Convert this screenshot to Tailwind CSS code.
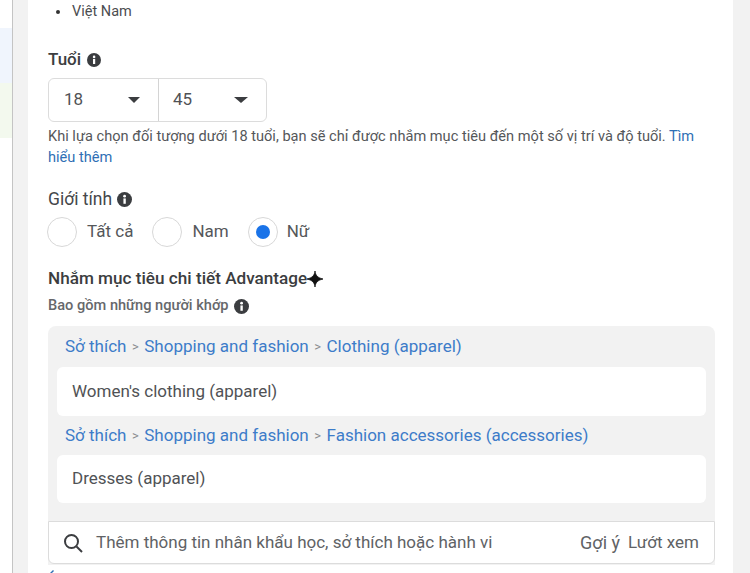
<!DOCTYPE html>
<html lang="vi">
<head>
<meta charset="UTF-8">
<title>Nhắm mục tiêu</title>
<script src="https://cdn.jsdelivr.net/npm/@tailwindcss/browser@4"></script>
</head>
<body class="bg-white overflow-hidden font-['Roboto',sans-serif]">
<div class="flex w-[750px] h-[573px] overflow-hidden">
  <!-- left edge of the page behind the panel -->
  <div class="w-[12px] flex flex-col shrink-0">
    <div class="h-[28px] bg-white"></div>
    <div class="h-[55px] bg-[#f0f5fd]"></div>
    <div class="h-[55px] bg-[#f3f9ee]"></div>
  </div>
  <div class="w-[16px] shrink-0 bg-[#f2f2f2] border-l border-[#c4c4c4]"></div>

  <div class="w-[705px] shrink-0 pl-[20px] pr-[18px] text-[#3b3d40]">
    <!-- location -->
    <div class="h-[24px] flex items-center pl-[8px] text-[14.5px] text-[#4b4d50]">
      <span class="w-[4px] h-[4px] rounded-full bg-[#333] mr-[12px]"></span>Việt Nam
    </div>

    <!-- age -->
    <div class="mt-[25px] h-[22px] flex items-center gap-[6px] text-[17px] font-medium">
      Tuổi
      <svg class="w-[14px] h-[14px]" viewBox="0 0 14 14"><circle cx="7" cy="7" r="7" fill="#3b3d40"/><rect x="6" y="6" width="2.2" height="5" fill="#fff"/><circle cx="7.1" cy="3.9" r="1.3" fill="#fff"/></svg>
    </div>
    <div class="mt-[7px] w-[219px] h-[44px] flex border border-[#dcdcdc] rounded-[6px] text-[17px] text-[#505255]">
      <div class="w-[110px] flex items-center justify-between pl-[15px] pr-[18px] border-r border-[#d4d4d4]">
        18
        <span class="w-0 h-0 border-x-[6px] border-x-transparent border-t-[6px] border-t-[#3b3d40]"></span>
      </div>
      <div class="flex-1 flex items-center justify-between pl-[14px] pr-[18px]">
        45
        <span class="w-0 h-0 border-x-[7px] border-x-transparent border-t-[6px] border-t-[#3b3d40]"></span>
      </div>
    </div>
    <div class="mt-[4px] text-[14.6px] leading-[21px] text-[#55575a]">
      <div>Khi lựa chọn đối tượng dưới 18 tuổi, bạn sẽ chỉ được nhắm mục tiêu đến một số vị trí và độ tuổi. <span class="text-[#2f6fb5]">Tìm</span></div>
      <div class="text-[#2f6fb5]">hiểu thêm</div>
    </div>

    <!-- gender -->
    <div class="mt-[20px] h-[22px] flex items-center gap-[5px] text-[17.5px] text-[#45474a]">
      Giới tính
      <svg class="w-[15px] h-[15px]" viewBox="0 0 14 14"><circle cx="7" cy="7" r="7" fill="#3b3d40"/><rect x="6" y="6" width="2.2" height="5" fill="#fff"/><circle cx="7.1" cy="3.9" r="1.3" fill="#fff"/></svg>
    </div>
    <div class="mt-[6px] h-[32px] flex items-center text-[17px] text-[#55575a]">
      <span class="w-[30px] h-[30px] rounded-full border border-[#d8d8d8] -ml-[1px]"></span>
      <span class="ml-[10px]">Tất cả</span>
      <span class="ml-[19px] w-[30px] h-[30px] rounded-full border border-[#d8d8d8]"></span>
      <span class="ml-[10px]">Nam</span>
      <span class="ml-[19px] w-[30px] h-[30px] rounded-full border border-[#d8d8d8] flex items-center justify-center"><span class="w-[14px] h-[14px] rounded-full bg-[#1a73e8]"></span></span>
      <span class="ml-[9px]">Nữ</span>
    </div>

    <!-- detailed targeting -->
    <div class="mt-[20px] h-[22px] flex items-center text-[17.15px] font-medium">
      Nhắm mục tiêu chi tiết Advantage
      <svg class="w-[16px] h-[16px] -mt-[1px]" viewBox="0 0 16 16"><path d="M8 0 C8.6 4.2 10 6.6 16 8 C10 9.4 8.6 11.8 8 16 C7.4 11.8 6 9.4 0 8 C6 6.6 7.4 4.2 8 0Z" fill="#111" stroke="#111" stroke-width="0.8"/></svg>
    </div>
    <div class="mt-[6px] h-[20px] flex items-center gap-[5px] text-[14.6px] font-medium text-[#66686b]">
      Bao gồm những người khớp
      <svg class="w-[15px] h-[15px]" viewBox="0 0 14 14"><circle cx="7" cy="7" r="7" fill="#3b3d40"/><rect x="6" y="6" width="2.2" height="5" fill="#fff"/><circle cx="7.1" cy="3.9" r="1.3" fill="#fff"/></svg>
    </div>

    <div class="mt-[10px] w-[667px] h-[239px] bg-[#f2f2f2] rounded-t-[8px] flex flex-col">
      <div class="h-[41px] pl-[17px] flex items-center text-[17px] text-[#3d7cc9]">
        Sở thích <span class="mx-[5.5px] text-[13px] text-[#8a8c8f]">&gt;</span> Shopping and fashion <span class="mx-[5.5px] text-[13px] text-[#8a8c8f]">&gt;</span> Clothing (apparel)
      </div>
      <div class="mx-[9px] h-[49px] bg-white rounded-[6px] pl-[15px] flex items-center text-[17px] text-[#505255]">Women's clothing (apparel)</div>
      <div class="h-[39px] pl-[17px] flex items-center text-[17px] text-[#3d7cc9]">
        Sở thích <span class="mx-[5.5px] text-[13px] text-[#8a8c8f]">&gt;</span> Shopping and fashion <span class="mx-[5.5px] text-[13px] text-[#8a8c8f]">&gt;</span> Fashion accessories (accessories)
      </div>
      <div class="mx-[9px] h-[48px] bg-white rounded-[6px] pl-[15px] flex items-center text-[17px] text-[#505255]">Dresses (apparel)</div>
      <div class="mt-[18px] h-[43px] bg-white border border-[#dcdcdc] rounded-b-[6px] flex items-center pl-[14px] pr-[15px] text-[17px] text-[#606265]">
        <svg class="w-[20px] h-[20px] mr-[13px] shrink-0" viewBox="0 0 20 20" fill="none" stroke="#3b3d40" stroke-width="2"><circle cx="8.5" cy="8.5" r="6.5"/><path d="M13.5 13.5 L19 19"/></svg>
        <span>Thêm thông tin nhân khẩu học, sở thích hoặc hành vi</span>
        <span class="ml-auto text-[18px]">Gợi ý</span>
        <span class="ml-[8px]">Lướt xem</span>
      </div>
    </div>
    <svg class="mt-[5px] ml-[1px] w-[5px] h-[4px]" viewBox="0 0 5 4"><path d="M0 4 L4 0 L5 1 L2 4Z" fill="#2f6fb5"/></svg>
  </div>

  <div class="flex-1 bg-[#f2f2f2]"></div>
</div>
</body>
</html>
